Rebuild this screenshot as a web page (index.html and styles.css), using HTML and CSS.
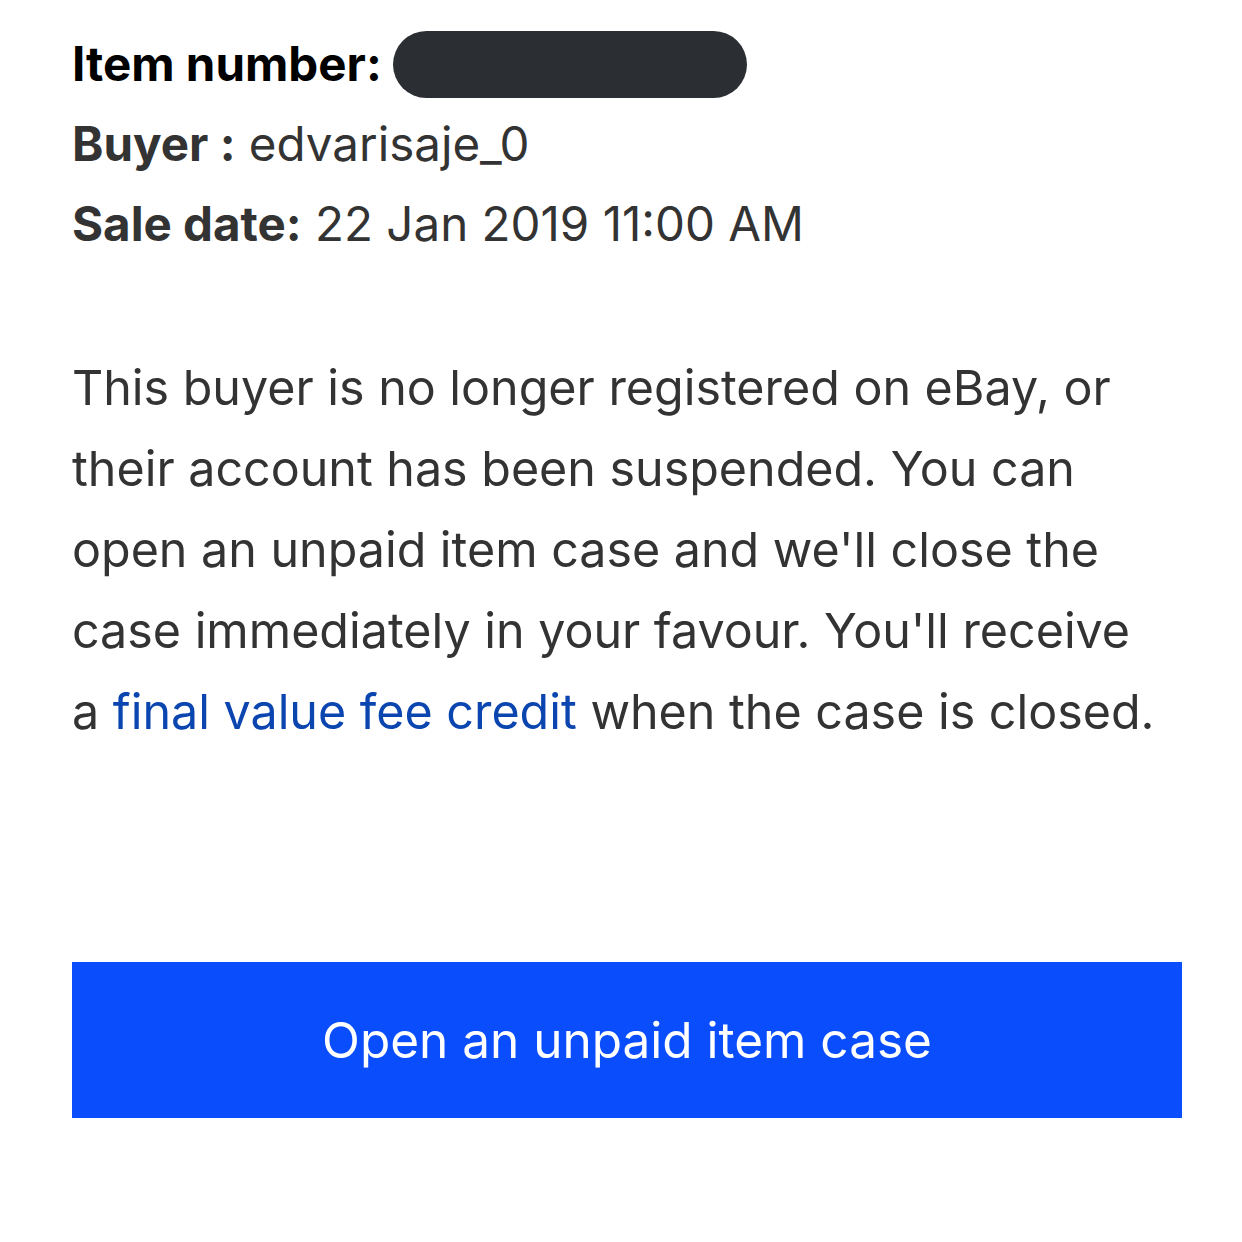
FILE: index.html
```html
<!DOCTYPE html>
<html lang="en">
<head>
<meta charset="utf-8">
<title>Unpaid item</title>
<link rel="stylesheet" href="styles.css">
</head>
<body>
<main class="page">
  <section class="details">
    <div class="row row-item"><span class="label-strong">Item number:</span><span class="redacted"></span></div>
    <div class="row"><span class="label">Buyer :</span> edvarisaje_0</div>
    <div class="row"><span class="label">Sale date:</span> 22 Jan 2019 11:00 AM</div>
  </section>
  <p class="message">This buyer is no longer registered on eBay, or<br>their account has been suspended. You can<br>open an unpaid item case and we'll close the<br>case immediately in your favour. You'll receive<br>a <a class="link" href="#">final value fee credit</a> when the case is closed.</p>
  <button class="cta" type="button">Open an unpaid item case</button>
</main>
</body>
</html>
```
FILE: styles.css
```css
html, body {
  margin: 0;
  padding: 0;
  background: #ffffff;
}
body {
  font-family: Inter, "Noto Sans", sans-serif;
  color: #333333;
}
.page {
  padding: 24px 60px 0 72px;
  display: flex;
  flex-direction: column;
}
.details {
  display: flex;
  flex-direction: column;
}
.row {
  font-size: 47.5px;
  line-height: 80px;
  height: 80px;
  white-space: nowrap;
}
.row-item {
  display: flex;
  align-items: center;
}
.label-strong {
  font-weight: 700;
  color: #000000;
}
.label {
  font-weight: 700;
}
.redacted {
  display: inline-block;
  width: 354px;
  height: 67px;
  border-radius: 34px;
  background: #2b2f33;
  margin-left: 11px;
}
.message {
  margin: 83px -40px 0 0;
  font-size: 48.4px;
  line-height: 81px;
  white-space: nowrap;
}
.link {
  color: #0a45b0;
  text-decoration: none;
}
.cta {
  margin-top: 210px;
  width: 1110px;
  height: 156px;
  border: 0;
  border-radius: 0;
  background: #0a4dfd;
  color: #ffffff;
  font-family: Inter, "Noto Sans", sans-serif;
  font-size: 49.5px;
  padding: 0;
}
```
